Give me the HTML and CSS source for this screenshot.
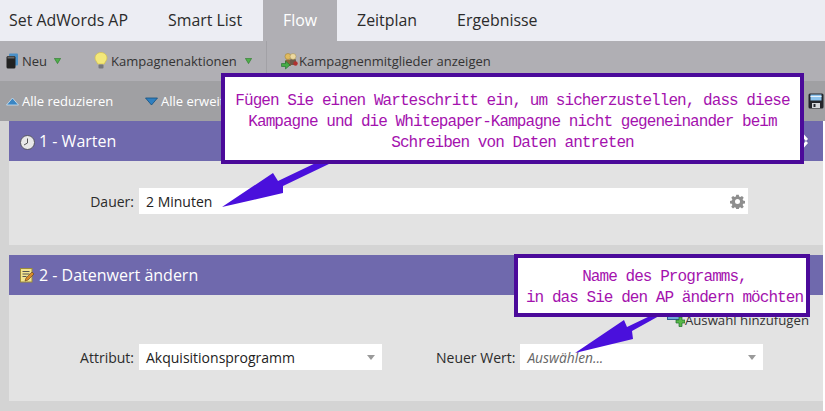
FILE: index.html
```html
<!DOCTYPE html>
<html lang="de">
<head>
<meta charset="utf-8">
<title>Flow</title>
<link rel="stylesheet" href="styles.css">
</head>
<body>
<div class="page">
  <nav class="tabs">
    <span class="tab">Set AdWords AP</span>
    <span class="tab">Smart List</span>
    <span class="tab active">Flow</span>
    <span class="tab">Zeitplan</span>
    <span class="tab">Ergebnisse</span>
  </nav>
  <div class="toolbar">
    <span class="tool tool-new">
      <svg class="ico" width="13" height="16" viewBox="0 0 13 16"><rect x="3" y="0.500" width="9" height="12" rx="1" fill="#4a90c8"/><rect x="0.500" y="3" width="9" height="12.500" rx="1.500" fill="#222"/><rect x="1.500" y="3.500" width="7" height="2" fill="#666"/></svg>
      Neu
      <svg class="caret" width="7" height="6" viewBox="0 0 7 6"><path d="M0.400 0.400H6.600L3.500 5.600Z" fill="#4fb04a" stroke="#2f7d2f" stroke-width="0.700"/></svg>
    </span>
    <span class="tool tool-camp">
      <svg class="ico" width="14" height="18" viewBox="0 0 14 18"><path d="M7 0.500C3.300 0.500 1 3 1 6c0 2.500 2 3.800 2.700 6h6.600C11 9.800 13 8.500 13 6c0-3-2.300-5.500-6-5.500Z" fill="#f3e87a" stroke="#d4c04a" stroke-width="0.700"/><rect x="4.500" y="12.500" width="5" height="4" rx="1" fill="#77787c"/></svg>
      Kampagnenaktionen
      <svg class="caret" width="7" height="6" viewBox="0 0 7 6"><path d="M0.400 0.400H6.600L3.500 5.600Z" fill="#4fb04a" stroke="#2f7d2f" stroke-width="0.700"/></svg>
    </span>
    <span class="tool tool-members">
      <svg class="ico-m" width="17" height="17" viewBox="0 0 17 17"><path d="M4 9c0-2 1-2.500 3-2.500s3 .5 3 2.500v4H4Z" fill="#8a6a3a"/><path d="M9 8c0-2 1-2.500 3-2.500s3 .5 3 2.500v4H9Z" fill="#6a5a4a"/><circle cx="7" cy="3.500" r="3" fill="#e0bb60" stroke="#9b7a2a" stroke-width="0.500"/><circle cx="12" cy="3.500" r="3" fill="#ecd9a0" stroke="#a08a50" stroke-width="0.500"/><circle cx="14.500" cy="10.500" r="2.200" fill="#b03030"/><path d="M0.500 10.500h4v-2.500l4.500 4-4.500 4v-2.500h-4Z" fill="#46ad46" stroke="#1f6f2f" stroke-width="0.600"/></svg>
      Kampagnenmitglieder anzeigen
    </span>
  </div>
  <div class="subbar">
    <span class="sub sub-collapse">
      <svg width="13" height="9" viewBox="0 0 13 9"><path d="M0.500 8L6.500 1L12.500 8Z" fill="#3a86c4" stroke="#cfe3f2" stroke-width="0.800"/></svg>
      Alle reduzieren
    </span>
    <span class="sub">
      <svg width="13" height="9" viewBox="0 0 13 9"><path d="M0.500 1L6.500 8L12.500 1Z" fill="#2f7fc0" stroke="#15507f" stroke-width="0.800"/></svg>
      Alle erweitern
    </span>
    <svg class="save" width="16" height="16" viewBox="0 0 16 16"><rect x="0.500" y="0.500" width="15" height="15" rx="1.500" fill="#24262c"/><rect x="2.500" y="1.500" width="11" height="6" fill="#8ec4ee"/><rect x="2.500" y="3" width="11" height="1" fill="#e8f2fa"/><rect x="4" y="10" width="8" height="5" fill="#d6d8dc"/><rect x="5.500" y="11" width="2" height="3" fill="#24262c"/></svg>
  </div>
  <main class="content">
    <section class="panel panel-wait">
      <header class="panel-head">
        <svg class="head-ico head-clock" width="15" height="15" viewBox="0 0 15 15"><circle cx="7.500" cy="7.500" r="7" fill="#e8e8e8" stroke="#55555f" stroke-width="1"/><path d="M7.500 3.500V8L4 10" fill="none" stroke="#555" stroke-width="1"/></svg>
        <span>1 - Warten</span>
        <svg class="head-x" width="8" height="14" viewBox="0 0 8 14"><path d="M2 1.500L6 6M6 8L2 12.500" stroke="#fff" stroke-width="2.800" fill="none"/></svg>
      </header>
      <div class="panel-body body-wait">
        <div class="field">
          <span class="label label-dauer">Dauer:</span>
          <div class="input input-wide">
            <span>2 Minuten</span>
            <svg width="15" height="15" viewBox="0 0 24 24"><path fill="#8e8e8e" fill-rule="evenodd" d="M10 1h4l.6 3.100 2 .8 2.600-1.800 2.800 2.800-1.800 2.600.8 2 3 .5v4l-3 .6-.8 2 1.800 2.600-2.800 2.800-2.600-1.800-2 .8-.6 3h-4l-.6-3-2-.8-2.600 1.800-2.800-2.800 1.800-2.600-.8-2-3-.6v-4l3-.5.8-2-1.800-2.600 2.800-2.800 2.600 1.800 2-.8ZM12 8a4 4 0 1 0 0 8 4 4 0 0 0 0-8Z"/></svg>
          </div>
        </div>
      </div>
    </section>
    <section class="panel panel-data">
      <header class="panel-head">
        <svg class="head-ico" width="15" height="15" viewBox="0 0 15 15"><rect x="0.500" y="0.500" width="11.500" height="13.500" fill="#f3e48e" stroke="#9b8b3a"/><path d="M2.500 3.500h7M2.500 6h7M2.500 8.500h4" stroke="#555" stroke-width="1"/><path d="M5 13l1-3 6-6 2 2-6 6Z" fill="#d98a2b" stroke="#5a3a1a" stroke-width="0.600"/></svg>
        <span>2 - Datenwert ändern</span>
      </header>
      <div class="panel-body body-data">
        <div class="add-row">
          <svg width="18" height="14" viewBox="0 0 18 14"><rect x="0.500" y="0.500" width="12" height="6" fill="#6fa8d8" stroke="#2f5f8f"/><path d="M9 7h3V4h3v3h3v3h-3v3.500h-3V10H9Z" fill="#58b848" stroke="#1f6f2f" stroke-width="0.700"/></svg>
          <span>Auswahl hinzufügen</span>
        </div>
        <div class="row-fields">
          <div class="field">
            <span class="label label-attr">Attribut:</span>
            <div class="input input-select">
              <span>Akquisitionsprogramm</span>
              <i class="drop"></i>
            </div>
          </div>
          <div class="field field-value">
            <span class="label">Neuer Wert:</span>
            <div class="input input-select">
              <span class="placeholder">Auswählen...</span>
              <i class="drop"></i>
            </div>
          </div>
        </div>
      </div>
    </section>
  </main>

  <svg class="arrows" width="825" height="411" viewBox="0 0 825 411">
    <path d="M331 163L283 186L283 193L222 207L273 173L278 181L322 160Z" fill="#4a10dc"/>
    <path d="M659 316L632 331L633 339L575 353L624 320L627 327L650 316Z" fill="#4a10dc"/>
  </svg>
  <aside class="callout callout-a">Fügen Sie einen Warteschritt ein, um sicherzustellen, dass diese<br>Kampagne und die Whitepaper-Kampagne nicht gegeneinander beim<br>Schreiben von Daten antreten</aside>
  <aside class="callout callout-b">Name des Programms,<br>in das Sie den AP ändern möchten</aside>
</div>
</body>
</html>
```
FILE: styles.css
```css
* { box-sizing: border-box; }
html, body { margin: 0; padding: 0; background: #fff; }
body {
  width: 825px;
  height: 411px;
  overflow: hidden;
  font-family: "Open Sans", sans-serif;
  color: #222;
}
.page { position: relative; width: 825px; height: 411px; overflow: hidden; }

.tabs {
  display: flex;
  height: 41px;
  background: #ecedf3;
  padding-left: 9px;
  font-size: 15.900px;
  line-height: 41px;
}
.tab { margin-right: 40px; color: #2b2b2b; white-space: nowrap; }
.tab.active {
  background: #b0afb4;
  color: #fff;
  margin: 0 20px 0 -19px;
  padding: 0 20px;
  width: 74px;
  flex: none;
}

.toolbar {
  display: flex;
  align-items: center;
  height: 40px;
  background: #b0afb4;
  font-size: 13px;
  color: #333;
  white-space: nowrap;
}
.tool { display: flex; align-items: center; gap: 3px; }
.tool-new { margin-left: 6px; width: 88px; }
.tool-new .caret { margin-left: 4px; }
.tool-camp { width: 172px; }
.tool-camp .caret { margin-left: 5px; }
.tool-members {
  height: 40px;
  padding-left: 14px;
  border-left: 1px solid #a2a1a6;
  gap: 1px;
}

.subbar {
  display: flex;
  align-items: center;
  height: 40px;
  background: #a0a0a3;
  color: #fff;
  font-size: 13px;
  white-space: nowrap;
}
.sub { display: flex; align-items: center; gap: 3px; }
.sub-collapse { margin-left: 6px; width: 139px; }
.save { margin-left: auto; margin-right: 1px; }

.content {
  height: 290px;
  margin-right: 2px;
  padding: 0 0 0 9px;
  background: #d4d4d4;
  display: flex;
  flex-direction: column;
  gap: 10px;
}
.panel-head {
  display: flex;
  align-items: center;
  height: 40px;
  padding-left: 11px;
  gap: 4px;
  background: #6f69ad;
  color: #fff;
  font-size: 16px;
  position: relative;
}
.head-clock { margin-top: 3px; }
.head-x { position: absolute; left: 792px; top: 13px; }
.panel-body { background: #e3e3e3; font-size: 14px; }
.body-wait { height: 84px; padding-top: 27px; }
.body-data { height: 106px; padding-top: 17px; }

.field { display: flex; align-items: center; gap: 5px; }
.label { text-align: right; color: #2b2b2b; white-space: nowrap; }
.label-dauer, .label-attr { width: 125px; }
.input {
  display: flex;
  align-items: center;
  justify-content: space-between;
  height: 26px;
  background: #fff;
  padding: 0 7px;
  font-size: 14px;
  color: #222;
}
.input-wide { width: 609px; padding-right: 3px; }
.input-select { width: 243px; }
.drop {
  width: 0;
  height: 0;
  border-left: 4px solid transparent;
  border-right: 4px solid transparent;
  border-top: 5px solid #9a9a9a;
}
.placeholder { font-style: italic; color: #666; font-size: 13.800px; }

.add-row {
  display: flex;
  justify-content: flex-end;
  align-items: center;
  height: 16px;
  padding-right: 14px;
  font-size: 13.200px;
  color: #333;
}
.row-fields { display: flex; margin-top: 16px; }
.field-value { margin-left: 54px; }

.arrows { position: absolute; left: 0; top: 0; }
.callout {
  position: absolute;
  background: #fff;
  border: 4px solid #4b0a9a;
  color: #a412ae;
  font-family: "Liberation Mono", monospace;
  font-size: 16px;
  letter-spacing: -0.940px;
  text-align: center;
  white-space: nowrap;
}
.callout-a { left: 221px; top: 73px; width: 583px; height: 91px; line-height: 20.800px; padding-top: 14px; }
.callout-b { left: 514px; top: 254px; width: 296px; height: 63px; line-height: 21px; padding: 9px 0 0 5px; }
```
